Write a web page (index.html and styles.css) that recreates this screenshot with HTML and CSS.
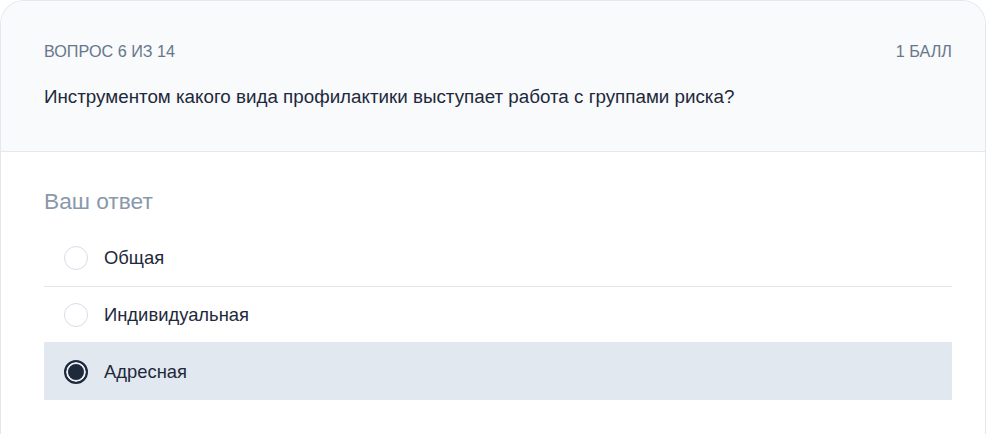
FILE: index.html
```html
<!DOCTYPE html>
<html lang="ru">
<head>
<meta charset="utf-8">
<link rel="stylesheet" href="styles.css">
</head>
<body>
<div class="card">
  <div class="card-head">
    <div class="meta">
      <span>ВОПРОС 6 ИЗ 14</span>
      <span>1 БАЛЛ</span>
    </div>
    <div class="question">Инструментом какого вида профилактики выступает работа с группами риска?</div>
  </div>
  <div class="card-body">
    <div class="label">Ваш ответ</div>
    <div class="options">
      <div class="option"><span class="radio"></span><span>Общая</span></div>
      <div class="option"><span class="radio"></span><span>Индивидуальная</span></div>
      <div class="option selected"><span class="radio checked"></span><span>Адресная</span></div>
    </div>
  </div>
</div>
</body>
</html>
```
FILE: styles.css
```css
html, body {
  margin: 0;
  padding: 0;
  background: #ffffff;
}
body {
  font-family: "Liberation Sans", Arial, sans-serif;
  color: #1e293b;
}
.card {
  width: 986px;
  height: 434px;
  box-sizing: border-box;
  border: 1px solid #e2e8f0;
  border-bottom: none;
  border-radius: 24px 24px 0 0;
  overflow: hidden;
  background: #fff;
}
.card-head {
  background: #f8fafc;
  border-bottom: 1px solid #e2e8f0;
  padding: 40px 33px 42px 43px;
}
.meta {
  display: flex;
  justify-content: space-between;
  font-size: 16.2px;
  line-height: 20px;
  color: #67768a;
}
.question {
  margin-top: 24px;
  font-size: 18.8px;
  line-height: 24px;
  color: #1e293b;
}
.card-body {
  padding: 35px 33px 0 43px;
}
.label {
  font-size: 22.7px;
  line-height: 28px;
  color: #8a98ab;
  margin-bottom: 15px;
}
.option {
  display: flex;
  align-items: center;
  gap: 16px;
  height: 56px;
  padding-left: 20px;
  border-bottom: 1px solid #e5e7eb;
  font-size: 18.4px;
  color: #1e293b;
}
.option:nth-child(2) {
  height: 55px;
}
.option:last-child {
  border-bottom: none;
}
.option.selected {
  background: #e2e8f0;
  height: 57px;
}
.radio {
  width: 24px;
  height: 24px;
  box-sizing: border-box;
  border-radius: 50%;
  border: 1.5px solid #d6dde6;
  background: #fff;
  flex: none;
}
.radio.checked {
  border: 2px solid #1e293b;
  background: #1e293b;
  box-shadow: inset 0 0 0 2px #eef1f5;
}
```
